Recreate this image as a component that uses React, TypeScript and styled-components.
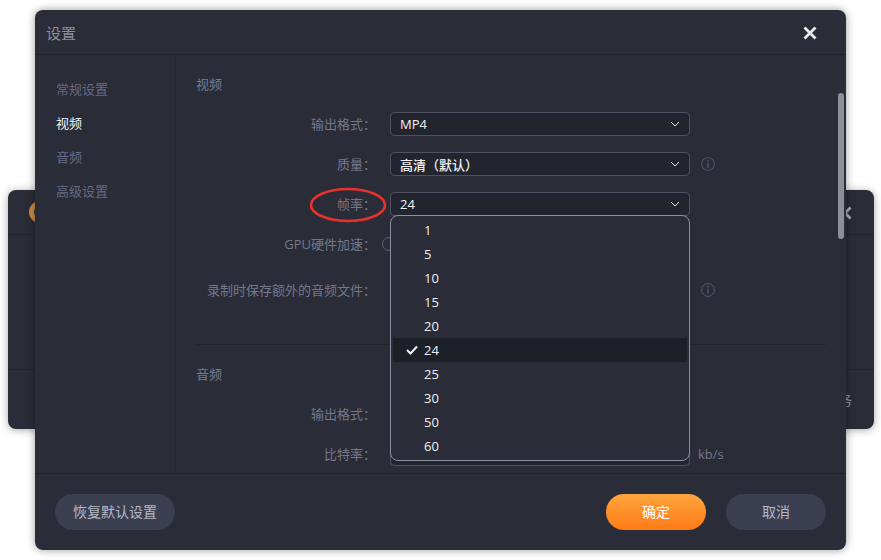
import React from 'react';
import styled, { createGlobalStyle } from 'styled-components';

const GlobalStyle = createGlobalStyle`
  html, body {
    margin: 0;
    padding: 0;
    background: #fff;
  }
  body {
    width: 881px;
    height: 560px;
    overflow: hidden;
    font-family: "Open Sans", "Noto Sans CJK SC", sans-serif;
  }
`;

const Desktop = styled.div`
  position: relative;
  width: 881px;
  height: 560px;
  overflow: hidden;
`;

const BackWindow = styled.div`
  position: absolute;
  left: 8px;
  top: 190px;
  width: 866px;
  height: 239px;
  display: flex;
  flex-direction: column;
  background: #2a2c37;
  border-radius: 8px;
  box-shadow: 0 1px 8px rgba(0, 0, 0, 0.35);
`;

const BackHeader = styled.div`
  height: 45px;
  box-sizing: border-box;
  display: flex;
  align-items: center;
  justify-content: space-between;
  padding: 0 22px 0 21px;
  border-bottom: 1px solid #23252e;
`;

const BackLogo = styled.div`
  width: 22px;
  height: 22px;
  box-sizing: border-box;
  border: 5px solid #c98a47;
  border-radius: 50%;
`;

const BackClose = styled.svg`
  margin-top: 2px;
`;

const BackBody = styled.div`
  flex: 1;
`;

const BackFooter = styled.div`
  height: 60px;
  box-sizing: border-box;
  display: flex;
  align-items: center;
  justify-content: flex-end;
  padding: 0 22px 0 0;
  border-top: 1px solid #23252e;
  font-size: 13px;
  color: #9a9cab;
`;

const Dialog = styled.div`
  position: absolute;
  left: 35px;
  top: 10px;
  width: 811px;
  height: 540px;
  display: flex;
  flex-direction: column;
  background: #2a2c37;
  border-radius: 8px;
  box-shadow: 0 0 9px rgba(0, 0, 0, 0.4);
`;

const Header = styled.div`
  height: 45px;
  box-sizing: border-box;
  display: flex;
  align-items: center;
  justify-content: space-between;
  padding: 0 29px 0 11px;
  border-bottom: 1px solid #22242c;
`;

const Title = styled.div`
  margin-top: 2px;
  font-size: 15px;
  line-height: 20px;
  color: #8b8e9c;
`;

const CloseButton = styled.div`
  display: flex;
  margin-top: 2px;
`;

const Body = styled.div`
  height: 418px;
  display: flex;
`;

const Sidebar = styled.div`
  width: 119px;
  flex-shrink: 0;
  padding: 17px 0 0 21px;
  display: flex;
  flex-direction: column;
  border-right: 1px solid #23252e;
`;

const NavItem = styled.div<{ $active?: boolean }>`
  height: 34px;
  line-height: 34px;
  font-size: 13px;
  color: ${(p) => (p.$active ? '#f2f3f6' : '#666a86')};
`;

const Content = styled.div`
  position: relative;
  flex: 1;
  overflow: hidden;
  box-sizing: border-box;
  padding: 19px 20px 0;
`;

const Scrollbar = styled.div`
  position: absolute;
  right: 2px;
  top: 38px;
  width: 6px;
  height: 146px;
  border-radius: 3px;
  background: #8e9097;
`;

const SectionTitle = styled.div`
  font-size: 13px;
  line-height: 20px;
  color: #777b92;
`;

const Rows = styled.div<{ $top: number }>`
  margin-top: ${(p) => p.$top}px;
  display: flex;
  flex-direction: column;
`;

const Row = styled.div<{ $after?: number }>`
  display: flex;
  align-items: center;
  height: 24px;
  margin-bottom: ${(p) => p.$after ?? 16}px;
`;

const Label = styled.div`
  position: relative;
  width: 180px;
  margin-right: 14px;
  flex-shrink: 0;
  text-align: right;
  font-size: 13px;
  line-height: 24px;
  color: #74778a;
  white-space: nowrap;
`;

const Select = styled.div`
  position: relative;
  width: 300px;
  height: 24px;
  flex-shrink: 0;
  box-sizing: border-box;
  display: flex;
  align-items: center;
  justify-content: space-between;
  padding: 0 9px 0 9px;
  background: #23252e;
  border: 1px solid #4f5163;
  border-radius: 4px;
  font-size: 13px;
  font-weight: 500;
  color: #f2f3f6;
`;

const Radio = styled.span`
  width: 14px;
  height: 14px;
  box-sizing: border-box;
  border: 1px solid #5d6072;
  border-radius: 50%;
  margin-left: -8px;
`;

const InfoIcon = styled.svg`
  margin-left: 11px;
  flex-shrink: 0;
`;

const Unit = styled.span`
  margin-left: 8px;
  font-size: 13px;
  color: #74778a;
`;

const Divider = styled.div`
  height: 1px;
  margin-bottom: 19px;
  background: #23252e;
`;

const Menu = styled.div`
  position: absolute;
  z-index: 5;
  left: -1px;
  top: 22px;
  width: 300px;
  height: 246px;
  box-sizing: border-box;
  padding: 2px 2px 0;
  background: #2a2c37;
  border: 1px solid #8d8fa1;
  border-radius: 8px;
`;

const MenuItem = styled.div<{ $selected?: boolean }>`
  height: 24px;
  display: flex;
  align-items: center;
  padding-left: 13px;
  background: ${(p) => (p.$selected ? '#1e2028' : 'transparent')};
  font-size: 13px;
  font-weight: 500;
  color: #eef0f5;
`;

const CheckSlot = styled.span`
  width: 18px;
  display: flex;
`;

const Ring = styled.svg`
  position: absolute;
  left: 113px;
  top: -5px;
`;

const Footer = styled.div`
  flex: 1;
  box-sizing: border-box;
  display: flex;
  align-items: flex-start;
  padding: 20px 20px 0;
  border-top: 1px solid #22242c;
`;

const Button = styled.div<{ $primary?: boolean; $wide?: boolean }>`
  width: ${(p) => (p.$wide ? 120 : 100)}px;
  height: 36px;
  line-height: 36px;
  text-align: center;
  border-radius: 18px;
  font-size: 14px;
  color: ${(p) => (p.$primary ? '#fff' : '#b5b8c6')};
  background: ${(p) =>
    p.$primary ? 'linear-gradient(180deg, #ffa53c 0%, #ff7b16 100%)' : '#3c3f52'};
`;

const FooterRight = styled.div`
  margin-left: auto;
  display: flex;
  gap: 20px;
`;

const Chevron = () => (
  <svg width="10" height="6" viewBox="0 0 10 6" fill="none">
    <path d="M1 1l4 4 4-4" stroke="#e8e9ee" strokeWidth="1" />
  </svg>
);

const Info = () => (
  <InfoIcon width="14" height="14" viewBox="0 0 14 14" fill="none">
    <circle cx="7" cy="7" r="6.4" stroke="#565a6c" />
    <rect x="6.4" y="3" width="1.3" height="1.5" fill="#565a6c" />
    <rect x="6.4" y="5.7" width="1.3" height="5" fill="#565a6c" />
  </InfoIcon>
);

const rates = [1, 5, 10, 15, 20, 24, 25, 30, 50, 60];

export default function App() {
  return (
    <Desktop>
      <GlobalStyle />
      <BackWindow>
        <BackHeader>
          <BackLogo />
          <BackClose width="14" height="14" viewBox="0 0 14 14" fill="none">
            <path d="M1.5 1.5l11 11M12.5 1.5l-11 11" stroke="#a9abba" strokeWidth="2.8" />
          </BackClose>
        </BackHeader>
        <BackBody />
        <BackFooter>任务</BackFooter>
      </BackWindow>

      <Dialog>
        <Header>
          <Title>设置</Title>
          <CloseButton>
            <svg width="14" height="14" viewBox="0 0 14 14" fill="none">
              <path d="M1.5 1.5l11 11M12.5 1.5l-11 11" stroke="#e9eaee" strokeWidth="2.8" />
            </svg>
          </CloseButton>
        </Header>
        <Body>
          <Sidebar>
            <NavItem>常规设置</NavItem>
            <NavItem $active>视频</NavItem>
            <NavItem>音频</NavItem>
            <NavItem>高级设置</NavItem>
          </Sidebar>
          <Content>
            <SectionTitle>视频</SectionTitle>
            <Rows $top={18}>
              <Row>
                <Label>输出格式：</Label>
                <Select>
                  MP4
                  <Chevron />
                </Select>
              </Row>
              <Row>
                <Label>质量：</Label>
                <Select>
                  高清（默认）
                  <Chevron />
                </Select>
                <Info />
              </Row>
              <Row>
                <Label>
                  帧率：
                  <Ring width="78" height="36" viewBox="0 0 78 36" fill="none">
                    <ellipse cx="39" cy="18" rx="37" ry="16" stroke="#e8312c" strokeWidth="2.6" />
                  </Ring>
                </Label>
                <Select>
                  24
                  <Chevron />
                  <Menu>
                    {rates.map((rate) => (
                      <MenuItem key={rate} $selected={rate === 24}>
                        <CheckSlot>
                          {rate === 24 && (
                            <svg width="12" height="10" viewBox="0 0 12 10" fill="none">
                              <path d="M1 5l3.5 3.5L11 1.5" stroke="#eef0f5" strokeWidth="2" />
                            </svg>
                          )}
                        </CheckSlot>
                        {rate}
                      </MenuItem>
                    ))}
                  </Menu>
                </Select>
              </Row>
              <Row $after={22}>
                <Label>GPU硬件加速：</Label>
                <Radio />
              </Row>
              <Row $after={42}>
                <Label>录制时保存额外的音频文件：</Label>
                <Select />
                <Info />
              </Row>
            </Rows>
            <Divider />
            <SectionTitle>音频</SectionTitle>
            <Rows $top={18}>
              <Row>
                <Label>输出格式：</Label>
                <Select />
              </Row>
              <Row>
                <Label>比特率：</Label>
                <Select />
                <Unit>kb/s</Unit>
              </Row>
            </Rows>
            <Scrollbar />
          </Content>
        </Body>
        <Footer>
          <Button $wide>恢复默认设置</Button>
          <FooterRight>
            <Button $primary>确定</Button>
            <Button>取消</Button>
          </FooterRight>
        </Footer>
      </Dialog>
    </Desktop>
  );
}
